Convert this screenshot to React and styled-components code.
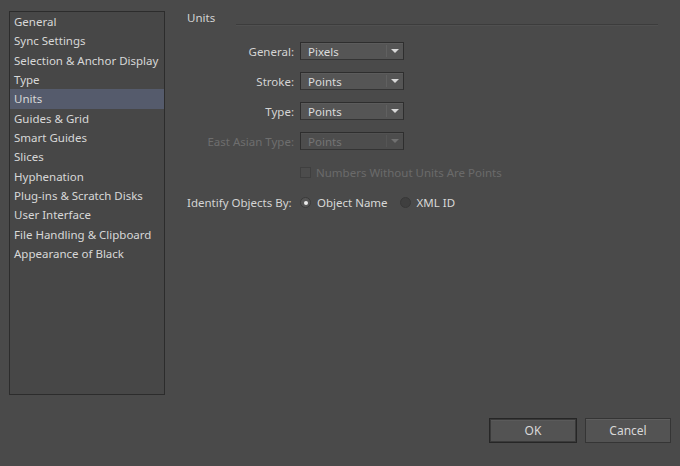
import React from "react";
import styled, { createGlobalStyle } from "styled-components";

const Global = createGlobalStyle`
  html, body { margin: 0; padding: 0; background: #4a4a4a; }
  body { font-family: "Noto Sans", "DejaVu Sans", sans-serif; font-size: 11.5px; color: #d4d4d4; }
  #root { width: 680px; height: 466px; }
`;

const Window = styled.div`
  width: 680px;
  height: 466px;
  background: #4a4a4a;
  box-sizing: border-box;
  padding: 11px 9px 23px 9px;
  display: grid;
  grid-template-columns: 156px 1fr;
  grid-template-rows: 384px 1fr;
`;

const Sidebar = styled.ul`
  list-style: none;
  margin: 0;
  padding: 0;
  border: 1px solid #2c2c2c;
  background: #474747;
  box-sizing: border-box;
`;

const Item = styled.li`
  height: 19.35px;
  line-height: 19.35px;
  padding-left: 4px;
  white-space: nowrap;
  color: #d8d8d8;
  background: ${(p) => (p.$active ? "#555b6c" : "transparent")};
`;

const Content = styled.div`
  padding-left: 22px;
  display: flex;
  flex-direction: column;
`;

const Header = styled.div`
  display: flex;
  align-items: center;
  height: 14px;
  padding-right: 13px;
  gap: 8px;
`;

const HeaderText = styled.span`
  color: #d4d4d4;
  position: relative;
  top: -1px;
`;

const HeaderLine = styled.div`
  flex: 1;
  height: 1px;
  margin-top: 14px;
  background: #3c3c3c;
  border-bottom: 1px solid #505050;
  margin-left: 13px;
`;

const Form = styled.div`
  margin-top: 17px;
  display: grid;
  grid-template-columns: 107px auto;
  column-gap: 6px;
  row-gap: 12px;
  align-items: center;
  justify-items: start;
`;

const Label = styled.span`
  justify-self: end;
  white-space: nowrap;
  color: ${(p) => (p.$disabled ? "#6e6e6e" : "#d4d4d4")};
`;

const Select = styled.div`
  width: 104px;
  height: 18px;
  box-sizing: border-box;
  border: 1px solid #2e2e2e;
  border-bottom-color: #343434;
  background: ${(p) => (p.$disabled ? "#4d4d4d" : "#555555")};
  display: flex;
  align-items: center;
  color: ${(p) => (p.$disabled ? "#747474" : "#dcdcdc")};
  box-shadow: inset 0 1px 0 ${(p) => (p.$disabled ? "#525252" : "#5c5c5c")};
`;

const SelectValue = styled.span`
  flex: 1;
  padding-left: 7px;
`;

const SelectArrow = styled.span`
  width: 16px;
  height: 12px;
  border-left: 1px solid ${(p) => (p.$disabled ? "#555" : "#606060")};
  display: flex;
  align-items: center;
  justify-content: center;
  &::after {
    content: "";
    border-left: 4px solid transparent;
    border-right: 4px solid transparent;
    border-top: 4px solid ${(p) => (p.$disabled ? "#707070" : "#d8d8d8")};
  }
`;

const CheckRow = styled.div`
  grid-column: 2;
  display: flex;
  align-items: center;
  gap: 5px;
  color: #6a6a6a;
  margin-top: 3px;
`;

const Checkbox = styled.span`
  width: 11px;
  height: 11px;
  box-sizing: border-box;
  border: 1px solid #3f3f3f;
  background: #4c4c4c;
`;

const IdentifyLabel = styled.span`
  white-space: nowrap;
  color: #d4d4d4;
  margin-top: 3px;
`;

const RadioGroup = styled.div`
  display: flex;
  align-items: center;
  margin-top: 3px;
`;

const RadioOption = styled.label`
  display: flex;
  align-items: center;
  gap: 6px;
  margin-right: 12px;
  color: #d8d8d8;
`;

const Radio = styled.span`
  width: 11px;
  height: 11px;
  border-radius: 50%;
  box-sizing: border-box;
  background: ${(p) => (p.$checked ? "#555555" : "#3f3f3f")};
  border: 1px solid ${(p) => (p.$checked ? "#3a3a3a" : "#383838")};
  display: flex;
  align-items: center;
  justify-content: center;
  &::after {
    content: "";
    width: 4px;
    height: 4px;
    border-radius: 50%;
    background: ${(p) => (p.$checked ? "#eaeaea" : "transparent")};
  }
`;

const Footer = styled.div`
  grid-column: 1 / span 2;
  display: flex;
  justify-content: flex-end;
  align-items: flex-end;
  gap: 8px;
`;

const Button = styled.button`
  font: inherit;
  font-size: 12px;
  height: 25px;
  width: ${(p) => p.$w}px;
  box-sizing: border-box;
  background: #535353;
  color: #d8d8d8;
  border: 1px solid ${(p) => (p.$primary ? "#262626" : "#353535")};
  box-shadow: ${(p) =>
    p.$primary ? "inset 0 0 0 1px #3a3a3a, inset 0 2px 0 #5a5a5a" : "inset 0 1px 0 #5e5e5e"};
  padding: 0;
`;

const items = [
  "General",
  "Sync Settings",
  "Selection & Anchor Display",
  "Type",
  "Units",
  "Guides & Grid",
  "Smart Guides",
  "Slices",
  "Hyphenation",
  "Plug-ins & Scratch Disks",
  "User Interface",
  "File Handling & Clipboard",
  "Appearance of Black",
];

const selects = [
  { label: "General:", value: "Pixels" },
  { label: "Stroke:", value: "Points" },
  { label: "Type:", value: "Points" },
  { label: "East Asian Type:", value: "Points", disabled: true },
];

export default function App() {
  return (
    <>
      <Global />
      <Window>
        <Sidebar>
          {items.map((it) => (
            <Item key={it} $active={it === "Units"}>
              {it}
            </Item>
          ))}
        </Sidebar>
        <Content>
          <Header>
            <HeaderText>Units</HeaderText>
            <HeaderLine />
          </Header>
          <Form>
            {selects.map((s) => (
              <React.Fragment key={s.label}>
                <Label $disabled={s.disabled}>{s.label}</Label>
                <Select $disabled={s.disabled}>
                  <SelectValue>{s.value}</SelectValue>
                  <SelectArrow $disabled={s.disabled} />
                </Select>
              </React.Fragment>
            ))}
            <CheckRow>
              <Checkbox />
              Numbers Without Units Are Points
            </CheckRow>
            <IdentifyLabel>Identify Objects By:</IdentifyLabel>
            <RadioGroup>
              <RadioOption>
                <Radio $checked />
                Object Name
              </RadioOption>
              <RadioOption>
                <Radio />
                XML ID
              </RadioOption>
            </RadioGroup>
          </Form>
        </Content>
        <Footer>
          <Button $primary $w={88}>OK</Button>
          <Button $w={86}>Cancel</Button>
        </Footer>
      </Window>
    </>
  );
}
